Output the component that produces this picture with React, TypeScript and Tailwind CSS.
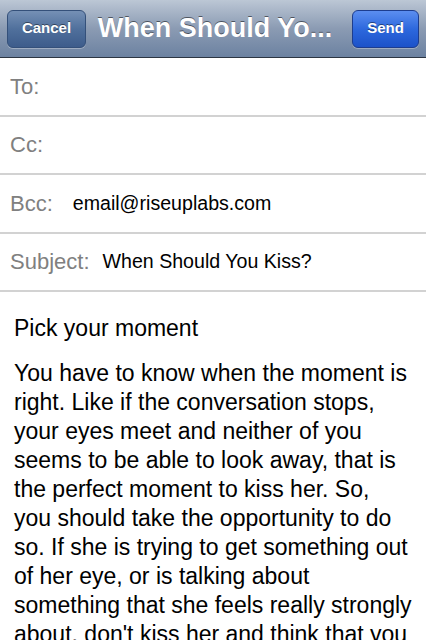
import React from "react";

const body =
  "You have to know when the moment is right. Like if the conversation stops, your eyes meet and neither of you seems to be able to look away, that is the perfect moment to kiss her. So, you should take the opportunity to do so. If she is trying to get something out of her eye, or is talking about something that she feels really strongly about, don't kiss her and think that you will be able to calm her down.";

function Field({ label, value, gap }: { label: string; value?: string; gap?: string }) {
  return (
    <div className="flex h-[58.5px] items-center border-b-2 border-[#d2d2d2] pl-[10px]">
      <span className="text-[22px] text-[#808080]">{label}</span>
      {value && <span className={`text-[19.6px] text-black ${gap}`}>{value}</span>}
    </div>
  );
}

export default function App() {
  return (
    <div
      className="h-[640px] w-[426px] overflow-hidden bg-white"
      style={{ fontFamily: '"Liberation Sans", Arial, sans-serif' }}
    >
      {/* nav bar */}
      <div className="flex h-[58px] items-center border-b border-[#2c3542] bg-gradient-to-b from-[#bcc7d5] via-[#8b9bb3] to-[#6c82a1] px-[7px]">
        <button className="h-[38px] w-[79px] rounded-[6px] border border-[#34507a] bg-gradient-to-b from-[#7590b5] via-[#50709c] to-[#3d5c8b] text-[15px] font-bold text-white [text-shadow:0_-1px_0_rgba(0,0,0,0.45)] shadow-[0_1px_0_rgba(255,255,255,0.3)]">
          Cancel
        </button>
        <div className="flex-1 truncate pr-[8px] text-center text-[27px] font-bold text-white [text-shadow:0_-1px_0_rgba(0,0,0,0.5)]">
          When Should Yo...
        </div>
        <button className="h-[38px] w-[67px] rounded-[6px] border border-[#1d3d8e] bg-gradient-to-b from-[#5b8ef0] via-[#2d68dd] to-[#1c52c9] text-[15px] font-bold text-white [text-shadow:0_-1px_0_rgba(0,0,0,0.45)] shadow-[0_1px_0_rgba(255,255,255,0.3)]">
          Send
        </button>
      </div>

      <Field label="To:" />
      <Field label="Cc:" />
      <Field label="Bcc:" value="email@riseuplabs.com" gap="ml-[20px]" />
      <Field label="Subject:" value="When Should You Kiss?" gap="ml-[13px]" />

      {/* message body */}
      <div className="px-[14px] pt-[22px] text-[23px] leading-[29px] text-black">
        <p>Pick your moment</p>
        <p className="mt-[16px]">{body}</p>
      </div>
    </div>
  );
}
